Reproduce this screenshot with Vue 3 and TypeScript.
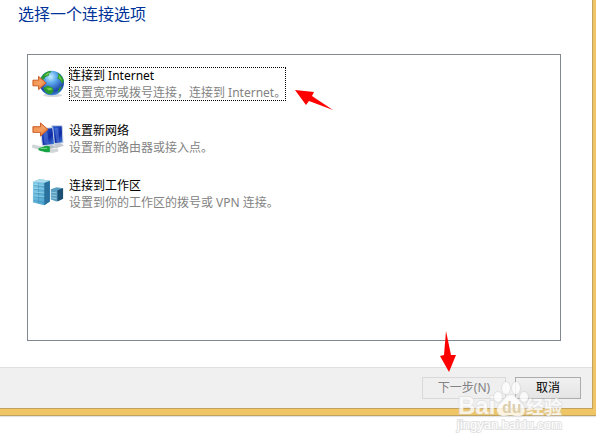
<script setup lang="ts">
import { ref } from 'vue'

interface ConnectionOption {
  id: string
  title: string
  detail: string
}

const options: ConnectionOption[] = [
  { id: 'internet', title: '连接到 Internet', detail: '设置宽带或拨号连接，连接到 Internet。' },
  { id: 'network', title: '设置新网络', detail: '设置新的路由器或接入点。' },
  { id: 'workplace', title: '连接到工作区', detail: '设置到你的工作区的拨号或 VPN 连接。' },
]

const focused = ref('internet')
</script>

<template>
  <div class="page">
    <div class="frame">
      <main class="dialog">
        <section class="content">
          <h1>选择一个连接选项</h1>
          <ul class="list">
            <li v-for="option in options" :key="option.id">
              <button class="option" type="button" @click="focused = option.id">
                <svg v-if="option.id === 'internet'" class="icon" viewBox="0 0 34 34" aria-hidden="true">
                  <defs>
                    <radialGradient id="sea" cx="45%" cy="25%" r="75%">
                      <stop offset="0" stop-color="#c4efff" />
                      <stop offset=".35" stop-color="#5aa6ec" />
                      <stop offset=".8" stop-color="#1d45ac" />
                      <stop offset="1" stop-color="#3f8ad8" />
                    </radialGradient>
                    <linearGradient id="arrow" x2="1" y2="1">
                      <stop offset="0" stop-color="#f58a48" />
                      <stop offset=".55" stop-color="#f3a163" />
                      <stop offset="1" stop-color="#e85b12" />
                    </linearGradient>
                  </defs>
                  <ellipse cx="22" cy="30" rx="10" ry="2" fill="#d5d9dc" />
                  <circle cx="21" cy="17" r="13" fill="url(#sea)" />
                  <path d="M10 11c2-4 5-6 9-7l2 1-3 2 0 2-4 2-1 2-4 1zM27 6c4 2 6 5 7 9l-2 3-2-4-3-2 1-3zM12 22l5-2 5 2 1 4-3 3c-4 0-7-3-8-7zM29 22l3-2-2 5-3 2z" fill="#279936" />
                  <path d="M13 9l4-3 2 0-3 3zM28 8l3 4 1 3-3-3zM15 22l5 0 2 2-4 1z" fill="#75cf48" />
                  <path d="M1 14h6v-4l8 7-8 7v-4H1z" fill="url(#arrow)" stroke="#c9541c" />
                </svg>
                <svg v-else-if="option.id === 'network'" class="icon" viewBox="0 0 34 34" aria-hidden="true">
                  <defs>
                    <linearGradient id="screen" x2="1" y2="1">
                      <stop offset="0" stop-color="#2460d4" />
                      <stop offset=".6" stop-color="#102aa4" />
                      <stop offset="1" stop-color="#4a8de7" />
                    </linearGradient>
                  </defs>
                  <path d="M23 24l7-2 4 3-8 3z" fill="#c3c9ce" />
                  <path d="M21 4l11 0 1 18-10 1z" fill="url(#screen)" stroke="#cfd8e2" />
                  <path d="M13 26l8-2 5 3-8 2z" fill="#b5bcc2" />
                  <path d="M9 7l13-1 2 18-13 1z" fill="url(#screen)" stroke="#d2dbe4" />
                  <path d="M24 6l4 0 1 15-3 0zM12 9l4-1 2 15-5 0z" fill="#6a8ee6" opacity=".45" />
                  <path d="M2 26l8 2 11 3 5-1" fill="none" stroke="#d0d5d8" stroke-width="4" stroke-linecap="round" />
                  <path d="M7 28c5-1 7-4 12-2l0 6c-4 1-8-1-12-2z" fill="#16a443" />
                  <path d="M9 28l7 0" stroke="#83dc8b" />
                  <path d="M1 5h8V1l8 7-8 7v-4H1z" fill="url(#arrow)" stroke="#c9541c" />
                </svg>
                <svg v-else class="icon" viewBox="0 0 34 34" aria-hidden="true">
                  <defs>
                    <linearGradient id="server" x2="1" y2="1">
                      <stop offset="0" stop-color="#8ed0ea" />
                      <stop offset="1" stop-color="#3c9ccb" />
                    </linearGradient>
                  </defs>
                  <path d="M20 13l6-2 7 1v11l-7 3-6-2z" fill="#5a9fc2" />
                  <path d="M27 14l6-2v11l-6 3z" fill="#1c5072" />
                  <path d="M20 16l6 1M20 19l6 1M20 22l6 1" stroke="#9accdd" />
                  <path d="M1 5l7-3 11 2v22l-6 4-12-3z" fill="url(#server)" />
                  <path d="M13 6l6-2v22l-6 4z" fill="#2b719e" />
                  <path d="M1 5l7-3 11 2-6 2z" fill="#abdcec" />
                  <path d="M2 9l11 1M2 13l11 1M2 17l11 1M2 21l11 1M2 25l11 2M7 6v22" stroke="#3b8ab4" fill="none" opacity=".6" />
                  <path d="M2 8l11 1M2 12l11 1M2 16l11 1M2 20l11 1" stroke="#b8ebf7" fill="none" opacity=".5" />
                </svg>
                <span class="copy" :class="{ focused: focused === option.id }">
                  <span class="name">{{ option.title }}</span>
                  <span class="detail">{{ option.detail }}</span>
                  <svg v-if="option.id === 'internet'" class="pointer pointer-side" viewBox="0 0 38 20" aria-hidden="true">
                    <path d="M0 0L19 2L17 6L38 20L14 11L11 15Z" fill="#f00" />
                  </svg>
                </span>
              </button>
            </li>
          </ul>
        </section>
        <footer>
          <div class="next-wrap">
            <button class="action next" type="button" disabled>下一步(N)</button>
            <svg class="pointer pointer-down" viewBox="0 0 16 41" aria-hidden="true">
              <path d="M6 0L11 24L16 24L9 41L0 25L4 24Z" fill="#f00" />
            </svg>
          </div>
          <button class="action cancel" type="button">取消</button>
        </footer>
      </main>
      <svg class="watermark" viewBox="0 0 112 56" aria-hidden="true">
        <g class="mark">
          <text class="brand" x="2" y="37">Bai</text>
          <ellipse cx="42" cy="20" rx="4" ry="5" />
          <ellipse cx="50" cy="11" rx="4" ry="6" />
          <ellipse cx="60" cy="11" rx="4" ry="6" />
          <ellipse cx="68" cy="20" rx="4" ry="5" />
          <path d="M55 18c5 0 7 5 10 8 5 4 5 12-1 13-4 1-6-1-9-1-4 0-7 2-11 0-5-3-3-9 1-12 4-4 5-8 10-8z" />
          <text class="chinese" x="70" y="37">经验</text>
        </g>
        <text class="address" x="1" y="52">jingyan.baidu.com</text>
        <text class="du" x="46" y="36">du</text>
      </svg>
    </div>
  </div>
</template>

<style>
body {
  margin: 0;
  background: #fff;
}
</style>

<style scoped>
.page {
  box-sizing: border-box;
  min-height: 100vh;
  display: flex;
  padding-bottom: 29px;
  font-family: "Noto Sans", "Noto Sans CJK SC", sans-serif;
  font-size: 12px;
}

.frame {
  position: relative;
  flex: 1;
  display: flex;
  padding: 0 3px 6px 0;
  background: #efc565;
  border-bottom: 1px solid #bda260;
  box-shadow: 0 1px 1px #e4e4e4;
}

.dialog {
  flex: 1;
  display: flex;
  flex-direction: column;
  background: #fff;
  border: solid #c2a35c;
  border-width: 0 1px 1px 0;
}

.content {
  flex: 1;
  display: flex;
  flex-direction: column;
  padding: 2px 31px 26px 27px;
}

h1 {
  margin: 0 0 28px -9px;
  color: #003399;
  font-size: 16px;
  font-weight: 400;
  line-height: 24px;
}

.list {
  flex: 1;
  display: flex;
  flex-direction: column;
  gap: 21px;
  margin: 0;
  padding: 12px 4px;
  border: 1px solid #828790;
  list-style: none;
}

.option {
  display: flex;
  gap: 5px;
  padding: 0;
  border: 0;
  background: none;
  color: #000;
  font: inherit;
  text-align: left;
  outline: none;
}

.icon {
  width: 32px;
  height: 32px;
}

.copy {
  position: relative;
  box-sizing: border-box;
  height: 34px;
  display: flex;
  flex-direction: column;
  line-height: 17px;
  white-space: nowrap;
}

.focused {
  outline: 1px dotted #000;
  outline-offset: -1px;
}

.detail {
  color: #838383;
}

.pointer {
  position: absolute;
}

.pointer-side {
  left: calc(100% + 9px);
  top: 23px;
  width: 38px;
  height: 20px;
}

.pointer-down {
  left: 18px;
  bottom: 27px;
  width: 16px;
  height: 41px;
}

footer {
  display: flex;
  justify-content: flex-end;
  gap: 9px;
  padding: 9px 11px 9px 0;
  background: #f0f0f0;
  border-top: 1px solid #dfdfdf;
}

.next-wrap {
  position: relative;
}

.action {
  box-sizing: border-box;
  height: 22px;
  padding: 0;
  border: 1px solid #acacac;
  background: linear-gradient(#f1f1f1, #e4e4e4);
  color: #000;
  font: inherit;
  line-height: 20px;
}

.next {
  width: 84px;
  border-color: #d9d9d9;
  background: #efefef;
  color: #838383;
}

.cancel {
  width: 66px;
}

.watermark {
  position: absolute;
  right: 28px;
  bottom: -18px;
  width: 112px;
  height: 56px;
  overflow: visible;
  pointer-events: none;
}

.mark {
  fill: #fff;
  fill-opacity: .8;
  stroke: #d0d0d0;
  stroke-opacity: .4;
  stroke-width: 2px;
  paint-order: stroke;
}

.brand {
  font: 700 24px "Liberation Sans", sans-serif;
}

.chinese {
  font: 700 18px "Noto Sans CJK SC", sans-serif;
}

.address {
  fill: #fff;
  stroke: #e2e2e2;
  stroke-width: 2px;
  paint-order: stroke;
  font: 13px "Liberation Sans", sans-serif;
}

.du {
  fill: #dccfae;
  font: 700 16px "Liberation Sans", sans-serif;
}
</style>
